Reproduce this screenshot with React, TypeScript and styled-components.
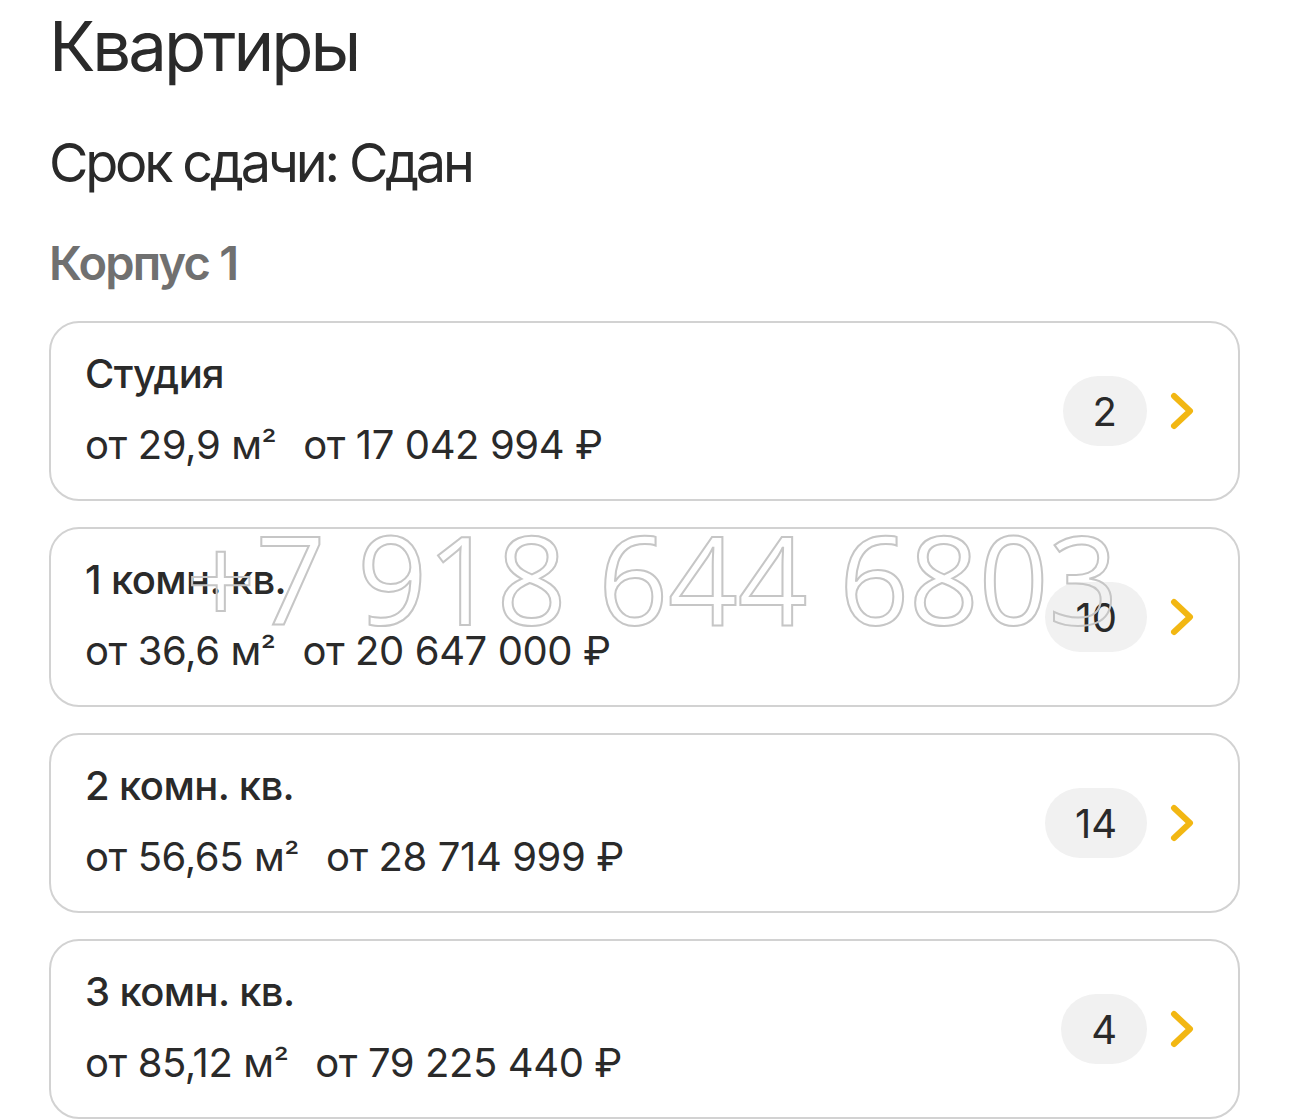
import React from "react";
import styled, { createGlobalStyle } from "styled-components";

const Global = createGlobalStyle`
  html, body { margin: 0; padding: 0; background: #ffffff; }
  body { font-family: Inter, "Noto Sans", sans-serif; color: #2b2b2b; }
  * { box-sizing: border-box; }
`;

const Page = styled.div`
  position: relative;
  width: 1290px;
  height: 1119px;
  overflow: hidden;
  padding: 11px 50px 0 49px;
  display: flex;
  flex-direction: column;
`;

const Title = styled.h1`
  margin: 0;
  font-family: Inter, sans-serif;
  font-weight: 400;
  font-size: 69px;
  line-height: 70px;
  color: #2a2a2a;
  letter-spacing: -3px;
`;

const Subtitle = styled.h2`
  margin: 54px 0 0;
  font-family: Inter, sans-serif;
  font-weight: 400;
  font-size: 54px;
  line-height: 55px;
  color: #2a2a2a;
  letter-spacing: -3.2px;
`;

const Section = styled.h3`
  margin: 49px 0 0;
  font-family: Inter, sans-serif;
  font-weight: 600;
  font-size: 47px;
  line-height: 47px;
  color: #707070;
  letter-spacing: -1.8px;
`;

const List = styled.div`
  margin-top: 35px;
  display: flex;
  flex-direction: column;
  gap: 26px;
`;

const Card = styled.div`
  height: 180px;
  border: 2.5px solid #d2d2d2;
  border-radius: 30px;
  padding: 0 43px 0 34px;
  display: flex;
  align-items: center;
  justify-content: space-between;
`;

const Info = styled.div`
  display: flex;
  flex-direction: column;
  gap: 30px;
`;

const Name = styled.div`
  font-family: Inter, sans-serif;
  font-weight: 500;
  font-size: 40px;
  line-height: 40px;
  color: #2a2a2a;
  letter-spacing: -0.6px;
`;

const Meta = styled.div`
  display: flex;
  gap: 27px;
  font-family: Inter, sans-serif;
  font-weight: 400;
  font-size: 40px;
  line-height: 42px;
  color: #2a2a2a;
  letter-spacing: -0.4px;
`;

const Sup = styled.span`
  font-size: 34px;
  position: relative;
  top: -2px;
`;

const Right = styled.div`
  display: flex;
  align-items: center;
  gap: 22px;
`;

const Badge = styled.div`
  min-width: 83px;
  height: 70px;
  padding: 0 30px;
  border-radius: 35px;
  background: #f1f1f1;
  display: flex;
  align-items: center;
  justify-content: center;
  font-family: Inter, sans-serif;
  font-size: 40px;
  color: #2a2a2a;
`;

const Watermark = styled.div`
  position: absolute;
  left: 186px;
  top: 517px;
  font-family: "Open Sans", sans-serif;
  font-size: 122px;
  line-height: 122px;
  white-space: nowrap;
  color: transparent;
  -webkit-text-stroke: 2px #c6c6c6;
  pointer-events: none;
`;

const Chevron = () => (
  <svg width="26" height="38" viewBox="0 0 26 38" fill="none">
    <path
      d="M5 4 L21 19 L5 34"
      stroke="#F2B713"
      strokeWidth="6"
      strokeLinecap="round"
      strokeLinejoin="round"
    />
  </svg>
);

const items = [
  { name: "Студия", area: "от 29,9 м", price: "от 17 042 994 ₽", count: 2 },
  { name: "1 комн. кв.", area: "от 36,6 м", price: "от 20 647 000 ₽", count: 10 },
  { name: "2 комн. кв.", area: "от 56,65 м", price: "от 28 714 999 ₽", count: 14 },
  { name: "3 комн. кв.", area: "от 85,12 м", price: "от 79 225 440 ₽", count: 4 },
];

export default function App() {
  return (
    <>
      <Global />
      <Page>
        <Title>Квартиры</Title>
        <Subtitle>Срок сдачи: Сдан</Subtitle>
        <Section>Корпус 1</Section>
        <List>
          {items.map((it) => (
            <Card key={it.name}>
              <Info>
                <Name>{it.name}</Name>
                <Meta>
                  <span>
                    {it.area}
                    <Sup>²</Sup>
                  </span>
                  <span>{it.price}</span>
                </Meta>
              </Info>
              <Right>
                <Badge>{it.count}</Badge>
                <Chevron />
              </Right>
            </Card>
          ))}
        </List>
        <Watermark>+7 918 644 6803</Watermark>
      </Page>
    </>
  );
}
